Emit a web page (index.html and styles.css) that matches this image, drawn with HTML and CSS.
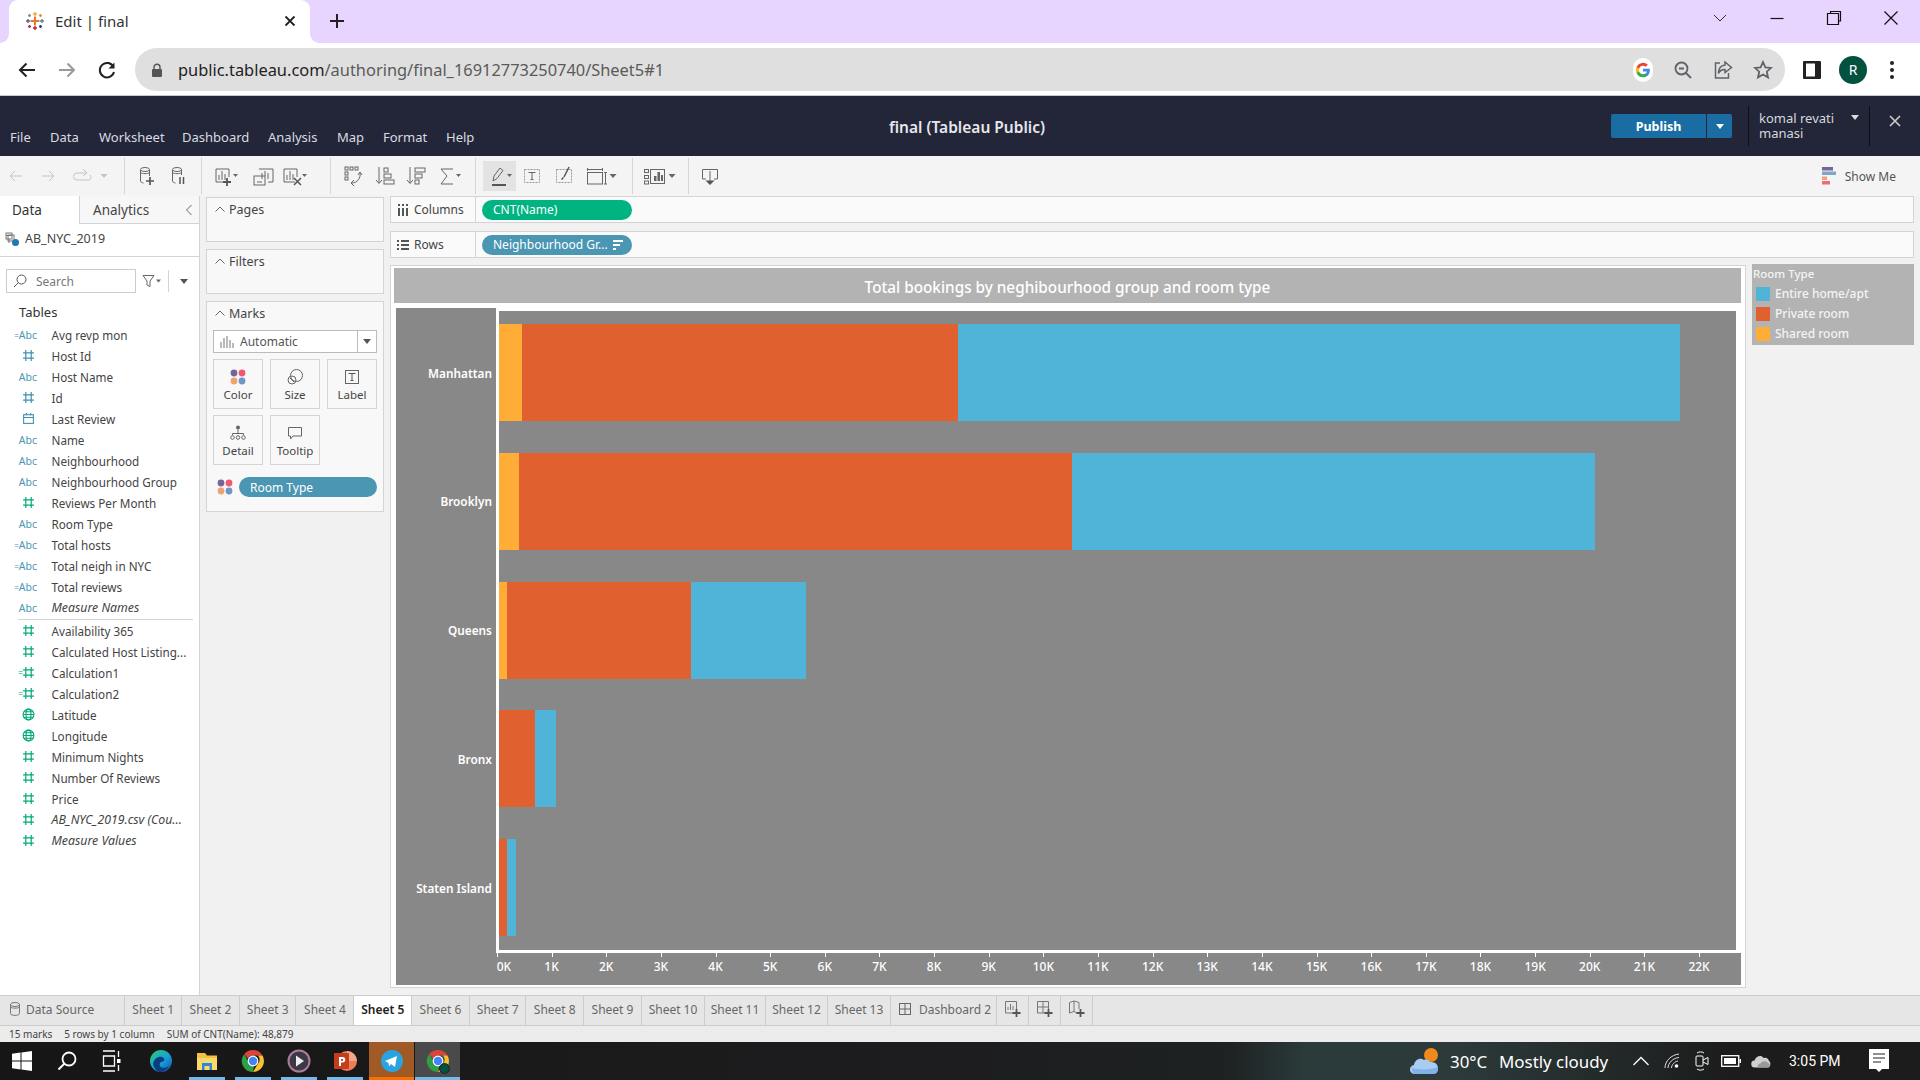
FILE: index.html
```html
<!DOCTYPE html>
<html lang="en">
<head>
<meta charset="utf-8">
<title>Edit | final</title>
<link rel="stylesheet" href="styles.css">
</head>
<body>
<svg class="defs" width="0" height="0">
  <symbol id="hash" viewBox="0 0 12 12"><path d="M3.500 1v10M8.500 1v10M1 3.500h10M1 8.500h10" fill="none" stroke="currentColor" stroke-width="1.100"/></symbol>
  <symbol id="globe" viewBox="0 0 12 12"><g fill="none" stroke="currentColor" stroke-width="1"><circle cx="6" cy="6" r="5"/><ellipse cx="6" cy="6" rx="2.300" ry="5"/><path d="M1 6h10M1.700 3.500h8.600M1.700 8.500h8.600"/></g></symbol>
  <symbol id="cal" viewBox="0 0 12 12"><g fill="none" stroke="currentColor" stroke-width="1"><rect x="1.500" y="2.500" width="9" height="8"/><path d="M1.500 5h9M4 1v2M8 1v2"/></g></symbol>
  <symbol id="four" viewBox="0 0 16 16"><circle cx="4" cy="4" r="3.400" fill="#76659a"/><circle cx="12" cy="4" r="3.400" fill="#ee5a6f"/><circle cx="4" cy="12" r="3.400" fill="#f2a06e"/><circle cx="12" cy="12" r="3.400" fill="#6e97c4"/></symbol>
  <symbol id="chrome" viewBox="0 0 24 24"><path d="M12 1a11 11 0 0 1 9.500 5.500H12a5.500 5.500 0 0 0-5 3.200L3.300 5A11 11 0 0 1 12 1z" fill="#dc4437"/><path d="M21.500 6.500A11 11 0 0 1 12 23l4.800-8.200a5.500 5.500 0 0 0 0-8.300z" fill="#fbc02d"/><path d="M12 23A11 11 0 0 1 3.300 5l4.600 8.900a5.500 5.500 0 0 0 5 3.500z" fill="#2f9e44"/><circle cx="12" cy="12" r="5.400" fill="#fff"/><circle cx="12" cy="12" r="4.200" fill="#4285f4"/></symbol>
</svg>

<div class="tabstrip">
  <div class="tab">
    <svg class="favicon" viewBox="0 0 20 20"><g stroke-width="1.400" fill="none"><path d="M10 5.500v9M5.500 10h9" stroke="#e8762d" stroke-width="2"/><path d="M10 1v4M8 3h4" stroke="#f2a93b"/><path d="M10 15v4M8 17h4" stroke="#c72037"/><path d="M1 10h4M3 8v4" stroke="#5b6591"/><path d="M15 10h4M17 8v4" stroke="#59879b"/><path d="M4.500 3v3M3 4.500h3" stroke="#7099a6"/><path d="M15.500 3v3M14 4.500h3" stroke="#eb912b"/><path d="M4.500 14v3M3 15.500h3" stroke="#bb2f4e"/><path d="M15.500 14v3M14 15.500h3" stroke="#1f447e"/></g></svg>
    <span class="tab-title">Edit | final</span>
    <svg class="tab-x" viewBox="0 0 12 12"><path d="M1.500 1.500l9 9M10.500 1.500l-9 9" stroke="#222" stroke-width="1.800" fill="none"/></svg>
  </div>
  <svg class="plus" viewBox="0 0 16 16"><path d="M8 1v14M1 8h14" stroke="#222" stroke-width="2" fill="none"/></svg>
  <div class="win-ctrls">
    <svg class="wc" viewBox="0 0 16 16"><path d="M2 5l6 6 6-6" stroke="#333" fill="none"/></svg>
    <svg class="wc" viewBox="0 0 16 16"><path d="M1.500 8.500h13" stroke="#111" stroke-width="1.200" fill="none"/></svg>
    <svg class="wc" viewBox="0 0 16 16"><path d="M4.500 3V1.500h10V11H12.500M1.500 3.500h11v11h-11z" stroke="#111" stroke-width="1.200" fill="none"/></svg>
    <svg class="wc" viewBox="0 0 16 16"><path d="M1.500 1.500l13 13M14.500 1.500l-13 13" stroke="#111" stroke-width="1.200" fill="none"/></svg>
  </div>
</div>

<div class="omnibar">
  <svg class="nav" viewBox="0 0 20 20"><path d="M18 10H3M9.500 3.500L3 10l6.500 6.500" stroke="#222" stroke-width="2" fill="none"/></svg>
  <svg class="nav" viewBox="0 0 20 20"><path d="M2 10h15M10.500 3.500L17 10l-6.500 6.500" stroke="#999" stroke-width="2" fill="none"/></svg>
  <svg class="nav" viewBox="0 0 20 20"><path d="M16.500 7A7.200 7.200 0 1 0 17 12" stroke="#222" stroke-width="2" fill="none"/><path d="M17.500 2.500v6h-6z" fill="#222"/></svg>
  <div class="urlpill">
    <svg class="lock" viewBox="0 0 12 14"><path d="M3 6V4.200a3 3 0 0 1 6 0V6" stroke="#555" stroke-width="1.400" fill="none"/><rect x="1" y="6" width="10" height="8" rx="1" fill="#555"/></svg>
    <span class="url"><span class="url-host">public.tableau.com</span>/authoring/final_16912773250740/Sheet5#1</span>
    <div class="url-icons">
      <span class="gbadge"><svg viewBox="0 0 20 20"><path d="M17.600 10.200c0-.6-.1-1.100-.2-1.600H10v3.100h4.300a3.700 3.700 0 0 1-1.600 2.400v2h2.600c1.500-1.400 2.300-3.400 2.300-5.900z" fill="#4285f4"/><path d="M10 18c2.200 0 4-.7 5.300-2l-2.600-2c-.7.500-1.600.8-2.700.8a4.700 4.700 0 0 1-4.400-3.300H2.900v2.100A8 8 0 0 0 10 18z" fill="#34a853"/><path d="M5.600 11.500a4.800 4.800 0 0 1 0-3V6.400H2.900a8 8 0 0 0 0 7.200z" fill="#fbbc05"/><path d="M10 5.200c1.200 0 2.300.4 3.100 1.200l2.300-2.300A8 8 0 0 0 2.900 6.400l2.700 2.100A4.700 4.700 0 0 1 10 5.200z" fill="#ea4335"/></svg></span>
      <svg class="ui" viewBox="0 0 20 20"><circle cx="8.500" cy="8.500" r="6" stroke="#5f6368" stroke-width="1.800" fill="none"/><path d="M13 13l5 5M6 8.500h5" stroke="#5f6368" stroke-width="1.800" fill="none"/></svg>
      <svg class="ui" viewBox="0 0 20 20"><path d="M7 3H2.500v15h13v-5" stroke="#5f6368" stroke-width="1.500" fill="none"/><path d="M12 2l6.500 5.500L12 12.500V9.500c-3.500 0-5.500 1.500-6.500 4 0-5 2.500-8 6.500-8.500z" stroke="#5f6368" stroke-width="1.500" fill="none"/></svg>
      <svg class="ui" viewBox="0 0 20 20"><path d="M10 2l2.400 5.300 5.600.6-4.200 3.800 1.200 5.700L10 14.500l-5 2.900 1.200-5.700L2 7.900l5.600-.6z" stroke="#5f6368" stroke-width="1.800" fill="none"/></svg>
    </div>
  </div>
  <svg class="side" viewBox="0 0 18 20"><rect x="0" y="1" width="18" height="18" rx="1" fill="#222"/><rect x="3" y="3.500" width="9" height="13" fill="#fff"/></svg>
  <span class="avatar">R</span>
  <svg class="kebab" viewBox="0 0 6 20"><circle cx="3" cy="3" r="2" fill="#222"/><circle cx="3" cy="10" r="2" fill="#222"/><circle cx="3" cy="17" r="2" fill="#222"/></svg>
</div>

<header class="appbar">
  <nav class="menu">
    <span class="m-file">File</span><span class="m-data">Data</span><span class="m-work">Worksheet</span><span class="m-dash">Dashboard</span><span class="m-ana">Analysis</span><span class="m-map">Map</span><span class="m-fmt">Format</span><span>Help</span>
  </nav>
  <div class="apptitle">final (Tableau Public)</div>
  <div class="publish"><span class="pub-main">Publish</span><span class="pub-drop"><i class="tri-w"></i></span></div>
  <div class="user"><span class="user-name">komal revati manasi</span><i class="tri-w user-tri"></i></div>
  <svg class="app-x" viewBox="0 0 12 12"><path d="M1 1l10 10M11 1L1 11" stroke="#c9c9c9" stroke-width="1.700" fill="none"/></svg>
</header>

<div class="toolbar">
  <div class="tg g1">
    <svg class="ti" viewBox="0 0 32 28"><path d="M22 14H10M15 9l-5 5 5 5" class="dis"/></svg>
    <svg class="ti" viewBox="0 0 32 28"><path d="M10 14h12M17 9l5 5-5 5" class="dis"/></svg>
    <svg class="ti" viewBox="0 0 32 28"><path d="M22 11h-9a3.500 3.500 0 0 0 0 7h12a3 3 0 0 0 1-5M19 7l4 4-4 3" class="dis"/></svg>
    <svg class="ti-s" viewBox="0 0 16 28"><path d="M4.500 12h7L8 16z" fill="#c4c4c4"/></svg>
  </div>
  <div class="tg g2">
    <svg class="ti" viewBox="0 0 32 28"><g class="ln"><ellipse cx="14" cy="7.500" rx="4.500" ry="2"/><path d="M9.500 7.500V19c0 1 1.500 1.800 3 2M18.500 7.500V14M9.500 10.500c1 1.500 8 1.500 9 0"/></g><path d="M19 15v8M15 19h8" stroke="#555" stroke-width="1.700"/></svg>
    <svg class="ti" viewBox="0 0 32 28"><g class="ln"><ellipse cx="14" cy="7.500" rx="4.500" ry="2"/><path d="M9.500 7.500V19c0 1 1.500 1.800 3 2M18.500 7.500V13M9.500 10.500c1 1.500 8 1.500 9 0"/></g><path d="M17 15v7M20.500 15v7" stroke="#555" stroke-width="1.500"/></svg>
  </div>
  <div class="tg g3">
    <svg class="ti" viewBox="0 0 32 28"><g class="ln"><path d="M16 20H5V7h13v8"/><path d="M8 18v-5M11 18V9M14 18v-6"/></g><path d="M16 16v8M12 20h8" stroke="#555" stroke-width="1.800"/><path d="M22 12h5l-2.500 3z" fill="#666"/></svg>
    <i class="gap5"></i>
    <svg class="ti" viewBox="0 0 32 28"><g class="ln"><path d="M11 7h14v13H20"/><rect x="6" y="14" width="11" height="9"/><path d="M14 17V11M17 14V9M20 17v-6M9 20h5"/></g></svg>
    <svg class="ti" viewBox="0 0 32 28"><g class="ln"><path d="M15 20H4V7h13v8"/><path d="M7 18v-5M10 18V9M13 18v-6"/></g><path d="M14 16l7 7M21 16l-7 7" stroke="#555" stroke-width="1.500"/><path d="M22 12h5l-2.500 3z" fill="#666"/></svg>
  </div>
  <div class="tg g4">
    <svg class="ti" viewBox="0 0 32 28"><g class="ln"><rect x="8" y="5" width="3" height="3"/><rect x="13" y="5" width="3" height="3"/><rect x="18" y="5" width="3" height="3"/><rect x="8" y="10" width="3" height="3"/><rect x="8" y="15" width="3" height="3"/><path d="M23 11c1 5-3 10-8 10M17 18l-3 3 3 3M21 13l2-3 2 3"/></g></svg>
    <svg class="ti" viewBox="0 0 32 28"><g class="ln"><path d="M10 5v16M7 18l3 3.500 3-3.500"/><rect x="15" y="6" width="4" height="4"/><rect x="15" y="12" width="7" height="4"/><rect x="15" y="18" width="10" height="4"/></g></svg>
    <svg class="ti tight" viewBox="0 0 32 28"><g class="ln"><path d="M10 5v16M7 18l3 3.500 3-3.500"/><rect x="15" y="6" width="10" height="4"/><rect x="15" y="12" width="7" height="4"/><rect x="15" y="18" width="4" height="4"/></g></svg>
    <svg class="ti" viewBox="0 0 32 28"><path d="M20 7H8l6 7-6 8h12" class="ln"/><path d="M23 12h5l-2.500 3z" fill="#666"/></svg>
  </div>
  <div class="tg g5">
    <span class="hl"><svg viewBox="0 0 33 30"><path d="M10 20l1-5 6-8 3 2.500-6 8zM9 23.500h14" stroke="#666" fill="none"/><path d="M9 24h14" stroke="#555" stroke-width="2"/><path d="M24 13h5l-2.500 3z" fill="#666"/></svg></span>
    <svg class="ti" viewBox="0 0 32 28"><rect x="8.500" y="7.500" width="15" height="13" fill="none" stroke="#999" stroke-dasharray="2 1"/><path d="M12.500 10.500h7M16 10.500v7M14.500 17.500h3" stroke="#666" fill="none"/></svg>
    <svg class="ti" viewBox="0 0 32 28"><rect x="8.500" y="7.500" width="15" height="13" fill="none" stroke="#999" stroke-dasharray="2 1"/><path d="M21 5l-5 10M15.500 15.500l-2 2" stroke="#555" stroke-width="1.500" fill="none"/></svg>
    <svg class="ti narrow" viewBox="0 0 28 28"><g class="ln"><path d="M7 7.500h16M7.500 6v3M22.500 6v3"/><rect x="7.500" y="10.500" width="15" height="11.500"/><path d="M25.500 10.500v11.500M24 10.500h3M24 22h3"/></g></svg>
    <svg class="ti-s fitc" viewBox="0 0 16 28"><path d="M4.500 12h7L8 16z" fill="#666"/></svg>
  </div>
  <div class="tg g6">
    <svg class="ti" viewBox="0 0 32 28"><g class="ln"><rect x="5.500" y="7.500" width="4" height="3"/><rect x="5.500" y="13.500" width="4" height="3"/><rect x="5.500" y="19" width="4" height="3"/><rect x="11.500" y="7.500" width="14" height="14"/></g><path d="M15 14v5h2.500v-5zM18.500 10v9H21v-9zM22 13v6h2v-6z" fill="#666"/></svg>
    <svg class="ti-s tuck" viewBox="0 0 16 28"><path d="M4.500 12h7L8 16z" fill="#666"/></svg>
  </div>
  <div class="tg g7">
    <svg class="ti" viewBox="0 0 32 28"><path d="M12 17H8.500V7.500h15V17H20M16 9v12" class="ln"/><path d="M11.500 18.500h9L16 23z" fill="#555"/></svg>
  </div>
  <div class="showme">
    <svg viewBox="0 0 14 18" class="sm-ic"><rect x="0" y="0" width="11" height="3.500" fill="#76659a"/><rect x="0" y="4.500" width="14" height="3.500" fill="#7ea6c9"/><rect x="0" y="9.500" width="5" height="3.500" fill="#f2a46e"/><rect x="0" y="14" width="8" height="3.500" fill="#ee6b7e"/></svg>
    <span>Show Me</span>
  </div>
</div>

<main class="main">
  <aside class="datapane">
    <div class="dp-tabs">
      <div class="dp-tab active">Data</div>
      <div class="dp-tab"><span>Analytics</span><svg class="dp-chev" viewBox="0 0 8 12"><path d="M6.500 1L1.500 6l5 5" stroke="#666" fill="none"/></svg></div>
    </div>
    <div class="ds-row">
      <svg class="ds-ic" viewBox="0 0 14 14"><g fill="none" stroke="#777"><rect x="1" y="1" width="6" height="6"/><path d="M4 7v4M1 3.500h6"/><rect x="3" y="3" width="6" height="6"/></g><circle cx="10.500" cy="10.500" r="3.500" fill="#1f77b4"/></svg>
      <span>AB_NYC_2019</span>
    </div>
    <div class="search-row">
      <div class="search"><svg viewBox="0 0 14 14" class="s-ic"><circle cx="8.500" cy="5.500" r="4.500" fill="none" stroke="#555"/><path d="M5.500 8.500L1 13" stroke="#555" fill="none"/></svg><span>Search</span></div>
      <svg class="s-filter" viewBox="0 0 20 14"><path d="M1 1.500h11L8 7v5.500l-3-1.500V7z" stroke="#666" fill="none"/><path d="M14 5.500h5l-2.500 3z" fill="#666"/></svg>
      <i class="s-sep"></i>
      <i class="s-tri"></i>
    </div>
    <div class="tables">Tables</div>
    <ul class="fields">
      <li><span class="fi abc"><b>=</b>Abc</span>Avg revp mon</li>
      <li><svg class="fi-s blue"><use href="#hash"/></svg>Host Id</li>
      <li><span class="fi abc">Abc</span>Host Name</li>
      <li><svg class="fi-s blue"><use href="#hash"/></svg>Id</li>
      <li><svg class="fi-s blue"><use href="#cal"/></svg>Last Review</li>
      <li><span class="fi abc">Abc</span>Name</li>
      <li><span class="fi abc">Abc</span>Neighbourhood</li>
      <li><span class="fi abc">Abc</span>Neighbourhood Group</li>
      <li><svg class="fi-s green"><use href="#hash"/></svg>Reviews Per Month</li>
      <li><span class="fi abc">Abc</span>Room Type</li>
      <li><span class="fi abc"><b>=</b>Abc</span>Total hosts</li>
      <li><span class="fi abc"><b>=</b>Abc</span>Total neigh in NYC</li>
      <li><span class="fi abc"><b>=</b>Abc</span>Total reviews</li>
      <li class="it"><span class="fi abc">Abc</span>Measure Names</li>
    </ul>
    <div class="f-div"></div>
    <ul class="fields">
      <li><svg class="fi-s green"><use href="#hash"/></svg>Availability 365</li>
      <li><svg class="fi-s green"><use href="#hash"/></svg>Calculated Host Listing...</li>
      <li><span class="calc">=</span><svg class="fi-s green"><use href="#hash"/></svg>Calculation1</li>
      <li><span class="calc">=</span><svg class="fi-s green"><use href="#hash"/></svg>Calculation2</li>
      <li><svg class="fi-s green"><use href="#globe"/></svg>Latitude</li>
      <li><svg class="fi-s green"><use href="#globe"/></svg>Longitude</li>
      <li><svg class="fi-s green"><use href="#hash"/></svg>Minimum Nights</li>
      <li><svg class="fi-s green"><use href="#hash"/></svg>Number Of Reviews</li>
      <li><svg class="fi-s green"><use href="#hash"/></svg>Price</li>
      <li class="it"><svg class="fi-s green"><use href="#hash"/></svg>AB_NYC_2019.csv (Cou...</li>
      <li class="it"><svg class="fi-s green"><use href="#hash"/></svg>Measure Values</li>
    </ul>
  </aside>

  <section class="cards">
    <div class="card c-small"><div class="card-h"><svg class="up" viewBox="0 0 10 6"><path d="M.5 5.500L5 1l4.500 4.500" stroke="#666" fill="none"/></svg>Pages</div></div>
    <div class="card c-small"><div class="card-h"><svg class="up" viewBox="0 0 10 6"><path d="M.5 5.500L5 1l4.500 4.500" stroke="#666" fill="none"/></svg>Filters</div></div>
    <div class="card c-marks">
      <div class="card-h"><svg class="up" viewBox="0 0 10 6"><path d="M.5 5.500L5 1l4.500 4.500" stroke="#666" fill="none"/></svg>Marks</div>
      <div class="marktype">
        <svg class="mt-ic" viewBox="0 0 14 14"><path d="M1 13V7M4 13V3M7 13V1M10 13V5M13 13V8" stroke="#777" fill="none"/></svg>
        <span class="mt-label">Automatic</span>
        <span class="mt-drop"><i class="s-tri"></i></span>
      </div>
      <div class="markgrid">
        <div class="mbtn"><svg class="mb-ic" viewBox="0 0 16 16"><use href="#four"/></svg>Color</div>
        <div class="mbtn"><svg class="mb-ic" viewBox="0 0 16 16"><g fill="none" stroke="#666"><circle cx="9.500" cy="6.500" r="6"/><circle cx="5" cy="11" r="4"/><path d="M3 9l4 4"/></g></svg>Size</div>
        <div class="mbtn"><svg class="mb-ic" viewBox="0 0 16 16"><rect x="1.500" y="1.500" width="13" height="13" fill="none" stroke="#666"/><path d="M4.500 4.500h7M8 4.500v7M6.500 11.500h3" stroke="#555" fill="none"/></svg>Label</div>
        <div class="mbtn"><svg class="mb-ic" viewBox="0 0 16 16"><circle cx="8" cy="2.500" r="2" fill="#666"/><path d="M8 4.500v4M2.500 10V8.500h11V10" stroke="#666" fill="none"/><g fill="none" stroke="#666"><circle cx="2.500" cy="12.500" r="1.800"/><circle cx="8" cy="12.500" r="1.800"/><circle cx="13.500" cy="12.500" r="1.800"/></g></svg>Detail</div>
        <div class="mbtn"><svg class="mb-ic" viewBox="0 0 16 16"><path d="M1.500 2.500h13v8.500H6l-2.500 3v-3h-2z" fill="none" stroke="#666"/></svg>Tooltip</div>
      </div>
      <div class="markpill-row">
        <svg class="mp-ic" viewBox="0 0 16 16"><use href="#four"/></svg>
        <span class="pill pill-blue mp">Room Type</span>
      </div>
    </div>
  </section>

  <section class="vizcol">
    <div class="shelf">
      <div class="shelf-l"><svg class="sh-ic" viewBox="0 0 12 12"><path d="M2 4v8M6 4v8M10 4v8" stroke="#555" stroke-width="2" fill="none"/><path d="M2 0v2M6 0v2M10 0v2" stroke="#555" stroke-width="2" fill="none"/></svg>Columns</div>
      <div class="shelf-r"><span class="pill pill-green">CNT(Name)</span></div>
    </div>
    <div class="shelf">
      <div class="shelf-l"><svg class="sh-ic" viewBox="0 0 12 12"><path d="M0 2h2M4 2h8M0 6h2M4 6h8M0 10h2M4 10h8" stroke="#555" stroke-width="2" fill="none"/></svg>Rows</div>
      <div class="shelf-r"><span class="pill pill-blue"><span>Neighbourhood Gr...</span><svg class="sort" viewBox="0 0 12 10"><path d="M1 0h10v2H1zM1 4h7v2H1zM1 8h3v2H1z" fill="#fff"/></svg></span></div>
    </div>
    <div class="vizrow">
      <div class="viz">
        <div class="viz-title">Total bookings by neghibourhood group and room type</div>
        <div class="chart">
          <div class="rowhdr">
            <div class="rl">Manhattan</div>
            <div class="rl">Brooklyn</div>
            <div class="rl">Queens</div>
            <div class="rl">Bronx</div>
            <div class="rl">Staten Island</div>
          </div>
          <div class="plotcol">
            <div class="plot">
              <div class="bar"><i class="yel" style="width:23px"></i><i class="ora" style="width:436px"></i><i class="blu" style="width:722px"></i></div>
              <div class="bar"><i class="yel" style="width:20px"></i><i class="ora" style="width:553px"></i><i class="blu" style="width:523px"></i></div>
              <div class="bar"><i class="yel" style="width:8px"></i><i class="ora" style="width:184px"></i><i class="blu" style="width:115px"></i></div>
              <div class="bar"><i class="ora" style="width:36px"></i><i class="blu" style="width:21px"></i></div>
              <div class="bar"><i class="ora" style="width:8px"></i><i class="blu" style="width:9px"></i></div>
            </div>
            <div class="axis">
              <span class="t t0">0K</span><span class="t">1K</span><span class="t">2K</span><span class="t">3K</span><span class="t">4K</span><span class="t">5K</span><span class="t">6K</span><span class="t">7K</span><span class="t">8K</span><span class="t">9K</span><span class="t">10K</span><span class="t">11K</span><span class="t">12K</span><span class="t">13K</span><span class="t">14K</span><span class="t">15K</span><span class="t">16K</span><span class="t">17K</span><span class="t">18K</span><span class="t">19K</span><span class="t">20K</span><span class="t">21K</span><span class="t">22K</span>
            </div>
          </div>
        </div>
      </div>
      <div class="legend">
        <div class="lg-title">Room Type</div>
        <div class="lg-item"><i class="sw blu"></i>Entire home/apt</div>
        <div class="lg-item"><i class="sw ora"></i>Private room</div>
        <div class="lg-item"><i class="sw yel"></i>Shared room</div>
      </div>
    </div>
  </section>
</main>

<div class="sheetbar">
  <div class="st st-ds"><svg class="st-ic" viewBox="0 0 12 14"><g fill="none" stroke="#777"><ellipse cx="6" cy="2.500" rx="4.500" ry="2"/><path d="M1.500 2.500v9c0 2.500 9 2.500 9 0v-9M1.500 5c1 1.500 8 1.500 9 0"/></g></svg>Data Source</div>
  <div class="st s1">Sheet 1</div><div class="st s2">Sheet 2</div><div class="st s1">Sheet 3</div><div class="st s2">Sheet 4</div>
  <div class="st s3 active">Sheet 5</div><div class="st s2">Sheet 6</div><div class="st s1">Sheet 7</div><div class="st s3">Sheet 8</div><div class="st s2">Sheet 9</div>
  <div class="st s4">Sheet 10</div><div class="st s5">Sheet 11</div><div class="st s6">Sheet 12</div><div class="st s4">Sheet 13</div>
  <div class="st st-db"><svg class="st-ic2" viewBox="0 0 12 12"><g fill="none" stroke="#666"><rect x=".5" y=".5" width="11" height="11"/><path d="M6 .5v11M.5 6h11"/></g></svg>Dashboard 2</div>
  <div class="st st-new"><svg viewBox="0 0 18 18" class="new-ic"><g fill="none" stroke="#777"><path d="M10 13H1.500V1.500h11V9"/><path d="M4 10V7M6.500 10V4M9 10V6"/></g><path d="M12.500 9v8M8.500 13h8" stroke="#555" stroke-width="1.800"/></svg></div>
  <div class="st st-new"><svg viewBox="0 0 18 18" class="new-ic"><g fill="none" stroke="#777"><path d="M10 13H1.500V1.500h11V9M7 1.500V13M1.500 7h11"/></g><path d="M12.500 9v8M8.500 13h8" stroke="#555" stroke-width="1.800"/></svg></div>
  <div class="st st-new"><svg viewBox="0 0 18 18" class="new-ic"><g fill="none" stroke="#777"><path d="M9 13l-3-1.500-4.500 1.500V2.500L6 1l5 1.500V9M6 1v10.500"/></g><path d="M12.500 9v8M8.500 13h8" stroke="#555" stroke-width="1.800"/></svg></div>
</div>

<div class="status"><span>15 marks</span><span>5 rows by 1 column</span><span>SUM of CNT(Name): 48,879</span></div>

<footer class="taskbar">
  <svg class="tk win" viewBox="0 0 20 20"><path d="M0 2.800l8.500-1.200v8H0zM9.500 1.400L20 0v9.600H9.500zM0 10.500h8.500v8L0 17.300zM9.500 10.500H20V20L9.500 18.600z" fill="#fff"/></svg>
  <svg class="tk srch" viewBox="0 0 20 20"><circle cx="12" cy="8" r="6.500" stroke="#fff" stroke-width="1.800" fill="none"/><path d="M7.500 12.500L1.500 18.500" stroke="#fff" stroke-width="2" fill="none"/></svg>
  <svg class="tk tv" viewBox="0 0 20 22"><path d="M1 1h12M1 21h12M1.500 6h11v10h-11z" stroke="#fff" fill="none" stroke-width="1.300"/><path d="M16.500 1v6M16.500 15v6" stroke="#fff" stroke-width="1.300"/><rect x="15" y="9" width="3.500" height="4" fill="#fff"/></svg>
  <span class="tkb b-edge"><svg viewBox="0 0 24 24"><defs><linearGradient id="eg" x1="0" y1="0" x2="1" y2="1"><stop offset="0" stop-color="#2ecc71"/><stop offset=".55" stop-color="#1aa0d8"/><stop offset="1" stop-color="#0b4fa8"/></linearGradient></defs><circle cx="12" cy="12" r="11" fill="url(#eg)"/><path d="M4 15c1-6 6-8 9-7 3 1 3 4 1 4.500-3 .5-4 2-3 4.500 1 2 5 3 9 0-2 4-6 6-9 6-3.500 0-6-4-7-8z" fill="#0a3d80"/></svg></span>
  <span class="tkb b-exp"><svg viewBox="0 0 24 24"><path d="M2 4h8l2 2.500h10V10H2z" fill="#f5c23e"/><path d="M2 9h20v12H2z" fill="#fcd96a"/><path d="M7 14h10v7h-2.500v-4h-5v4H7z" fill="#2b88d8"/></svg></span>
  <span class="tkb b-chr"><svg viewBox="0 0 24 24"><use href="#chrome"/></svg></span>
  <span class="tkb b-ply"><svg viewBox="0 0 24 24"><circle cx="12" cy="12" r="10.500" fill="#3a3a46" stroke="#b07a9a" stroke-width="2"/><path d="M9 6.500v11l8-5.500z" fill="#eee"/></svg></span>
  <span class="tkb b-ppt"><svg viewBox="0 0 24 24"><circle cx="14" cy="12" r="10" fill="#ed7d5a"/><path d="M14 2a10 10 0 0 1 10 10H14z" fill="#f4a58a"/><rect x="1" y="4" width="15" height="16" rx="1" fill="#c43e1c"/><path d="M6 8h3.500a2.700 2.700 0 0 1 0 5.500H8V17H6zM8 10v1.800h1.300a.9.900 0 0 0 0-1.800z" fill="#fff" fill-rule="evenodd"/></svg></span>
  <span class="tkb b-tg"><svg viewBox="0 0 24 24"><circle cx="12" cy="12" r="11" fill="#2aa3e0"/><path d="M5 12l12-5-2 11-4-3-2 2.500-.5-4L16 9l-7.500 5z" fill="#fff"/></svg></span>
  <span class="tkb b-chr2"><svg viewBox="0 0 24 24"><use href="#chrome"/></svg><i class="badge"></i></span>
  <div class="tray">
    <svg class="w-ic" viewBox="0 0 30 30"><circle cx="21" cy="9" r="7" fill="#f08a1d"/><path d="M5 28a4.500 4.500 0 0 1-1-9c.5-5 6-8 10-5 2-1 5 0 6 2 5-.5 8 2.500 8 6 0 3.500-2 6-5 6z" fill="#a9cdf2"/><path d="M2 22c5 2 20 2 26-1v2c0 3-2 5-5 5H5c-2 0-3-2-3-6z" fill="#7fb2e8"/></svg>
    <span class="temp">30°C</span>
    <span class="wtxt">Mostly cloudy</span>
    <svg class="tr-chev" viewBox="0 0 16 10"><path d="M.5 9L8 1.500 15.500 9" stroke="#fff" stroke-width="1.300" fill="none"/></svg>
    <svg class="tr-wifi" viewBox="0 0 16 16"><g fill="none" stroke="#ddd"><path d="M1 15C1 8 7 2 15 1M4 15C4 10 9 5 15 4.500M7.500 15C7.500 12 10.500 8.500 14 8"/></g><circle cx="12.500" cy="13" r="1.800" fill="#fff"/></svg>
    <svg class="tr-meet" viewBox="0 0 14 22"><rect x="1" y="6" width="7" height="10" rx="1" fill="none" stroke="#fff"/><path d="M8 10l5-2.500v7L8 12M2 3c2-1.500 5-1.500 7 0M2 19c2 1.500 5 1.500 7 0" stroke="#fff" fill="none"/></svg>
    <svg class="tr-bat" viewBox="0 0 20 12"><rect x=".7" y=".7" width="17" height="10.600" fill="none" stroke="#fff" stroke-width="1.300"/><rect x="3" y="3" width="12" height="6" fill="#fff"/><rect x="18.500" y="4" width="1.500" height="4" fill="#fff"/></svg>
    <svg class="tr-cloud" viewBox="0 0 20 14"><path d="M4 13.500a3.500 3.500 0 0 1-.5-7C5 2 10 .5 12.500 4c3-1 5 .5 5.500 3 2 .5 2 6.500-1 6.500z" fill="#cfcfcf"/><path d="M7 13.500c-1-2 .5-4 2.500-4 1.500-3 6-3 7.500-.5 2 0 3 4.500 0 4.500z" fill="#9a9a9a"/></svg>
    <span class="clock">3:05 PM</span>
    <svg class="tr-note" viewBox="0 0 20 24"><path d="M0 0h20v20h-7l-3 3-3-3H0z" fill="#fff"/><path d="M4 5h12M4 9h12M4 13h8" stroke="#222" stroke-width="1.200"/></svg>
  </div>
</footer>
</body>
</html>
```
FILE: styles.css
```css
* { box-sizing: border-box; }
html, body { margin: 0; padding: 0; }
body {
  width: 1920px; height: 1080px; overflow: hidden;
  display: flex; flex-direction: column;
  font-family: "Noto Sans", "Open Sans", sans-serif;
  font-size: 12px; color: #333; background: #f1f1f1;
}
.defs { position: absolute; }
svg { display: block; flex: none; }
i { font-style: normal; display: block; }
ul { list-style: none; margin: 0; padding: 0; }

/* browser chrome */
.tabstrip { height: 43px; flex: none; background: #e8d5ff; display: flex; align-items: flex-start; padding-left: 9px; }
.tab { position: relative; width: 301px; height: 43px; background: #fff; border-radius: 9px 9px 0 0; display: flex; align-items: center; padding: 0 0 1px 16px; font-size: 15px; }
.tab::before, .tab::after { content: ""; position: absolute; bottom: 0; width: 9px; height: 9px; }
.tab::before { left: -9px; background: radial-gradient(circle at 0 0, #e8d5ff 8.500px, #fff 9px); }
.tab::after { right: -9px; background: radial-gradient(circle at 100% 0, #e8d5ff 8.500px, #fff 9px); }
.favicon { width: 20px; height: 20px; }
.tab-title { margin-left: 10px; color: #333; flex: 1; }
.tab-x { width: 12px; height: 12px; margin-right: 14px; }
.plus { width: 16px; height: 16px; margin: 13px 0 0 19px; }
.win-ctrls { margin-left: auto; display: flex; height: 36px; align-items: center; padding-right: 21px; gap: 41px; }
.wc { width: 16px; height: 16px; }

.omnibar { height: 53px; flex: none; background: #fff; display: flex; align-items: center; padding: 1px 0 0 17px; border-bottom: 1px solid #c9c9c9; }
.nav { width: 20px; height: 20px; margin-right: 20px; }
.urlpill { width: 1650px; height: 43px; margin-left: -2px; border-radius: 22px; background: #dfdfdf; display: flex; align-items: center; padding-left: 16px; }
.lock { width: 12px; height: 14px; }
.url { margin-left: 15px; font-size: 16.400px; color: #5a5a5a; white-space: nowrap; }
.url-host { color: #222; }
.url-icons { margin-left: auto; display: flex; align-items: center; gap: 20px; padding-right: 12px; }
.gbadge { width: 20px; height: 24px; background: #fff; border-radius: 10px; display: flex; align-items: center; justify-content: center; }
.gbadge svg { width: 18px; height: 18px; }
.ui { width: 20px; height: 20px; }
.side { width: 18px; height: 20px; margin-left: 18px; }
.avatar { width: 28px; height: 28px; border-radius: 50%; background: #03523f; color: #fff; font-size: 14px; display: flex; align-items: center; justify-content: center; margin-left: 18px; }
.kebab { width: 6px; height: 20px; margin-left: 22px; }

.appbar { height: 60px; flex: none; background: #232638; color: #d9dbe2; display: flex; align-items: flex-start; position: relative; }
.menu { display: flex; align-items: center; font-size: 13px; height: 20px; margin-top: 31px; padding-left: 10px; width: 900px; }
.menu span { flex: none; }
.m-file { width: 40px; } .m-data { width: 49px; } .m-work { width: 83px; } .m-dash { width: 86px; } .m-ana { width: 69px; } .m-map { width: 46px; } .m-fmt { width: 63px; }
.apptitle { position: absolute; left: 0; width: 1934px; top: 20px; text-align: center; font-size: 15.500px; font-weight: 600; color: #e6e7ec; }
.publish { margin: 18px 0 0 711px; width: 121px; height: 24px; display: flex; background: #1a6da3; border-radius: 2px; color: #fff; font-weight: 700; font-size: 12.500px; }
.pub-main { width: 96px; display: flex; align-items: center; justify-content: center; border-right: 1px solid #232638; }
.pub-drop { flex: 1; display: flex; align-items: center; justify-content: center; }
.tri-w { width: 0; height: 0; border-left: 4px solid transparent; border-right: 4px solid transparent; border-top: 5px solid #fff; }
.user { margin: 10px 0 0 16px; width: 122px; height: 40px; border-left: 1px solid #0e0f18; border-right: 1px solid #0e0f18; padding: 5px 0 0 10px; font-size: 13px; line-height: 15px; color: #d5d7de; position: relative; }
.user-name { display: block; width: 80px; }
.user-tri { position: absolute; right: 10px; top: 9px; border-top-color: #ddd; }
.app-x { width: 12px; height: 12px; margin: 19px 0 0 19px; }

.toolbar { height: 40px; flex: none; background: #f4f4f4; display: flex; align-items: center; }
.tg { display: flex; align-items: center; height: 36px; border-right: 1px solid #d4d4d4; }
.g1 { width: 125px; }
.g2 { width: 77px; padding-left: 6px; }
.g3 { width: 129px; padding-left: 9px; }
.g4 { width: 145px; padding-left: 6px; }
.g5 { width: 157px; padding-left: 7px; }
.g6 { width: 56px; padding-left: 6px; }
.g7 { border-right: 0; padding-left: 5px; }
.ti { width: 32px; height: 28px; }
.ti.narrow { width: 28px; }
.ti.tight { margin-left: -1px; margin-right: 1px; }
.ti-s { width: 16px; height: 28px; }
.ti-s.tuck { margin-left: -7px; }
.ti-s.fitc { margin-left: -3px; }
.gap5 { width: 5px; }
.dis { fill: none; stroke: #c4c4c4; }
.ln { fill: none; stroke: #666; }
.hl { width: 33px; height: 30px; background: #e3e3e3; display: block; }
.hl svg { width: 33px; height: 30px; }
.showme { margin-left: auto; padding-right: 24px; display: flex; align-items: center; gap: 9px; color: #555; font-size: 12px; }
.sm-ic { width: 14px; height: 18px; }

/* main */
.main { height: 799px; flex: none; display: flex; background: #f1f1f1; overflow: hidden; }
.datapane { width: 200px; flex: none; background: #fff; border-right: 1px solid #d4d4d4; }
.dp-tabs { display: flex; height: 28px; font-size: 13.500px; }
.dp-tab { display: flex; align-items: center; }
.dp-tab.active { width: 79px; padding-left: 12px; color: #333; }
.dp-tab:not(.active) { flex: 1; padding-left: 13px; background: #f7f7f7; border-left: 1px solid #d4d4d4; border-bottom: 1px solid #d4d4d4; color: #444; }
.dp-chev { width: 8px; height: 12px; margin-left: auto; margin-right: 6px; }
.ds-row { height: 33px; display: flex; align-items: center; padding: 0 0 3px 5px; border-bottom: 1px solid #d4d4d4; gap: 6px; font-size: 12.500px; color: #444; }
.ds-ic { width: 14px; height: 14px; }
.search-row { display: flex; align-items: center; height: 24px; margin: 12px 0 0 6px; }
.search { width: 130px; height: 24px; border: 1px solid #ccc; display: flex; align-items: center; padding-left: 6px; gap: 9px; color: #777; }
.s-ic { width: 14px; height: 14px; }
.s-filter { width: 20px; height: 14px; margin-left: 6px; }
.s-sep { width: 1px; height: 22px; background: #d4d4d4; margin-left: 6px; }
.s-tri { width: 0; height: 0; border-left: 4px solid transparent; border-right: 4px solid transparent; border-top: 5px solid #555; margin-left: 11px; }
.tables { margin: 8px 0 1px 19px; height: 22px; font-size: 13px; line-height: 22px; color: #333; }
.fields li { height: 21px; display: flex; align-items: center; padding-left: 51.500px; position: relative; color: #444; white-space: nowrap; font-size: 11.700px; }
.fields li.it { font-style: italic; font-size: 12.300px; }
.fi { position: absolute; right: 162px; font-style: normal; font-size: 10.500px; color: #4a96b3; }
.fi b { font-weight: 400; color: #4a96b3; font-size: 8px; }
.fi-s { position: absolute; left: 21.500px; width: 13px; height: 13px; }
.blue { color: #3f8fae; }
.green { color: #00a878; }
.calc { position: absolute; left: 18px; font-size: 9px; color: #00a878; }
.f-div { height: 1px; margin: 1px 6px 0 18px; background: #d4d4d4; }

.cards { width: 184px; flex: none; margin-left: 6px; padding-top: 1px; display: flex; flex-direction: column; gap: 7px; }
.card { width: 178px; background: #f8f8f8; border: 1px solid #d4d4d4; padding: 0 6px; }
.c-small { height: 45px; }
.c-marks { height: 211px; }
.card-h { display: flex; align-items: center; gap: 4px; height: 24px; padding: 0 0 2px 2px; color: #444; font-size: 12.500px; }
.up { width: 10px; height: 6px; }
.marktype { height: 23px; width: 164px; margin-top: 4px; background: #fff; border: 1px solid #bbb; display: flex; align-items: center; padding-left: 6px; }
.mt-ic { width: 14px; height: 14px; }
.mt-label { margin-left: 6px; color: #555; flex: 1; font-size: 12px; }
.mt-drop { width: 19px; height: 100%; border-left: 1px solid #bbb; display: flex; align-items: center; }
.mt-drop .s-tri { margin-left: 5px; }
.markgrid { display: grid; grid-template-columns: repeat(3, 50px); gap: 6px 7px; margin-top: 6px; }
.mbtn { height: 50px; border: 1px solid #d4d4d4; background: #f8f8f8; display: flex; flex-direction: column; align-items: center; justify-content: flex-end; padding-bottom: 6px; gap: 2px; font-size: 11.500px; color: #444; }
.mb-ic { width: 16px; height: 16px; }
.markpill-row { display: flex; align-items: center; margin-top: 12px; }
.mp-ic { width: 16px; height: 16px; margin-left: 4px; }
.pill { display: flex; align-items: center; height: 20px; border-radius: 10px; color: #fff; width: 150px; padding: 0 8px 0 11px; }
.pill-green { background: #00b482; }
.pill-blue { background: #4a96b3; justify-content: space-between; }
.mp { width: 138px; margin-left: 6px; justify-content: flex-start; }
.sort { width: 12px; height: 10px; }

.vizcol { width: 1524px; flex: none; display: flex; flex-direction: column; }
.shelf { height: 27px; flex: none; display: flex; background: #fafafa; border: 1px solid #d4d4d4; margin-bottom: 7px; }
.shelf + .shelf { margin-top: 1px; margin-bottom: 6px; }
.shelf-l { width: 85px; flex: none; border-right: 1px solid #d4d4d4; display: flex; align-items: center; padding-left: 6px; gap: 5px; font-size: 12px; color: #444; }
.sh-ic { width: 12px; height: 12px; }
.shelf-r { flex: 1; display: flex; align-items: center; padding-left: 6px; }

.vizrow { display: flex; flex: 1; align-items: flex-start; }
.viz { width: 1356px; height: 723px; margin-top: 1px; border: 1px solid #d4d4d4; background: #fff; padding: 2px 4px 2px 3px; display: flex; flex-direction: column; }
.viz-title { height: 35px; background: #b3b3b3; color: #fff; font-size: 15.300px; font-weight: 500; text-align: center; padding-top: 3px; line-height: 32px; flex: none; }
.chart { display: flex; margin: 5px 0 0 2px; }
.rowhdr { width: 100px; height: 677px; background: #888; padding: 16px 4px 0 0; display: flex; flex-direction: column; gap: 31.750px; }
.rl { height: 97px; display: flex; align-items: center; justify-content: flex-end; color: #fff; font-weight: 600; font-size: 11.800px; }
.plotcol { width: 1246px; background: #fff; padding-top: 3px; }
.plot { margin: 0 5px 0 3px; height: 639px; background: #888; padding: 13px 0 14px; display: flex; flex-direction: column; justify-content: space-between; }
.bar { display: flex; height: 97px; }
.yel { background: #ffad37; }
.ora { background: #e06030; }
.blu { background: #4fb4d8; }
.axis { height: 32px; margin-top: 3px; background: #888; display: flex; }
.axis .t0 { margin-left: -26.300px; }
.t { flex: 0 0 54.650px; position: relative; text-align: center; color: #fff; font-size: 12px; font-weight: 500; padding-top: 6px; line-height: 16px; }
.t::before { content: ""; position: absolute; left: 50%; top: 0; width: 1px; height: 4px; background: #fff; }
.t0 { padding-left: 14px; }
.t0::before { left: 27px; }

.legend { width: 162px; height: 81px; margin-left: 6px; background: #b3b3b3; color: #f4f4f4; padding: 2px 0 0 1px; font-size: 12px; font-weight: 500; }
.lg-title { height: 18px; line-height: 16px; font-size: 11.500px; }
.lg-item { height: 20px; display: flex; align-items: center; padding: 0 0 2px 3px; gap: 5px; }
.sw { width: 14px; height: 14px; margin-top: 2px; }

/* sheet bar */
.sheetbar { height: 31px; flex: none; background: #e6e6e6; border-top: 1px solid #ccc; border-bottom: 1px solid #ccc; display: flex; }
.st { display: flex; align-items: center; justify-content: center; border-right: 1px solid #ccc; color: #666; font-size: 12px; height: 100%; flex: none; width: 57px; padding: 0 0 3px 1px; white-space: nowrap; }
.s1 { width: 56.500px; } .s2 { width: 58px; } .s3 { width: 57.500px; }
.s4 { width: 63px; } .s5 { width: 61px; } .s6 { width: 62px; }
.st.active { background: #fff; color: #222; font-weight: 600; }
.st-ds { width: 125px; gap: 5px; justify-content: flex-start; padding-left: 9px; }
.st-ic { width: 12px; height: 14px; }
.st-db { width: 106px; gap: 8px; padding-left: 4px; }
.st-ic2 { width: 12px; height: 12px; }
.st-new { width: 32px; padding-left: 2px; }
.new-ic { width: 18px; height: 18px; }

.status { height: 16px; flex: none; background: #ececec; display: flex; align-items: center; padding-left: 9px; gap: 12px; font-size: 10px; color: #444; }

/* taskbar */
.taskbar { height: 38px; flex: none; display: flex; align-items: center; background: linear-gradient(90deg, #161616 0, #1d1d1f 50%, #1e2223 64%, #2b3a3a 68%, #2c3a3a 76%, #1c1c1c 90%); position: relative; }
.tk { flex: none; }
.win { width: 20px; height: 20px; margin-left: 12px; }
.srch { width: 20px; height: 20px; margin-left: 25px; }
.tv { width: 20px; height: 22px; margin-left: 25px; }
.tkb { width: 46px; height: 38px; display: flex; align-items: center; justify-content: center; position: relative; flex: none; }
.tkb svg { width: 24px; height: 24px; }
.tkb::after { content: ""; position: absolute; left: 5px; right: 5px; bottom: 0; height: 3px; background: #76b9ed; }
.b-edge { margin-left: 16px; }
.b-edge::after { display: none; }
.b-tg { background: #a05a26; margin-left: 1px; width: 45px; }
.b-tg::after { left: 0; right: 0; background: #f97000; }
.b-chr2 { background: #4a4a4a; margin-left: 1px; width: 45px; }
.b-chr2::after { left: 0; right: 0; }
.badge { position: absolute; right: 10px; bottom: 6px; width: 11px; height: 11px; border-radius: 50%; background: #03523f; border: 1px solid #222; }
.tray { margin-left: auto; display: flex; align-items: center; color: #fff; font-size: 16.900px; height: 100%; }
.w-ic { width: 30px; height: 30px; }
.temp { margin-left: 10px; width: 37px; white-space: nowrap; }
.wtxt { margin-left: 12px; width: 110px; white-space: nowrap; }
.tr-chev { width: 16px; height: 10px; margin-left: 24px; }
.tr-wifi { width: 16px; height: 16px; margin-left: 15px; }
.tr-meet { width: 14px; height: 22px; margin-left: 15px; }
.tr-bat { width: 20px; height: 12px; margin-left: 12px; }
.tr-cloud { width: 20px; height: 14px; margin-left: 10px; }
.clock { margin-left: 18px; font-family: Roboto, sans-serif; font-size: 14px; width: 56px; white-space: nowrap; }
.tr-note { width: 20px; height: 24px; margin-left: 24px; margin-right: 31px; }
```
